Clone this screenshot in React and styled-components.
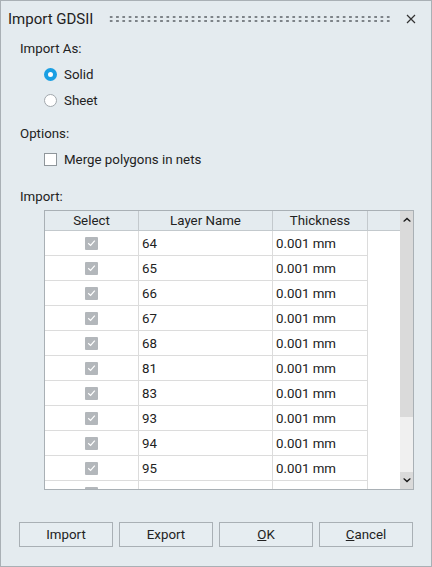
import styled, { createGlobalStyle } from 'styled-components'

const GlobalStyle = createGlobalStyle`
  html, body { margin: 0; padding: 0; background: #e4ebef; }
  body { font-family: Roboto, "Liberation Sans", sans-serif; color: #222; }
  * { box-sizing: border-box; }
`

const layers = ['64', '65', '66', '67', '68', '81', '83', '93', '94', '95', '100']

const Check = () => (
  <svg width="9" height="8" viewBox="0 0 9 8">
    <path d="M1.2 4.2 L3.6 6.4 L7.8 1.6" fill="none" stroke="#fff" strokeWidth="1.2" />
  </svg>
)

const Arrow = ({ down }) => (
  <svg width="8" height="5" viewBox="0 0 8 5" style={down ? { transform: 'rotate(180deg)' } : undefined}>
    <path d="M0 4.2 L4 0.4 L8 4.2 L6.6 4.8 L4 2.4 L1.4 4.8 Z" fill="#1a1a1a" />
  </svg>
)

const App = () => {
  return (
    <>
      <GlobalStyle />
      <Dialog>
        <TitleBar>
          <Title>Import GDSII</Title>
          <Grip />
          <Close>
            <svg width="10" height="10" viewBox="0 0 10 10">
              <path d="M1 1 L9 9 M9 1 L1 9" stroke="#333" strokeWidth="1.2" />
            </svg>
          </Close>
        </TitleBar>
        <Body>
          <Label>Import As:</Label>
          <OptionRow $top={2}>
            <Radio $checked />
            <span>Solid</span>
          </OptionRow>
          <OptionRow>
            <Radio />
            <span>Sheet</span>
          </OptionRow>
          <Label $top={11}>Options:</Label>
          <OptionRow $top={2}>
            <Box />
            <span>Merge polygons in nets</span>
          </OptionRow>
          <Label $top={15}>Import:</Label>
          <Table>
            <Grid>
              <HeadRow>
                <HeadCell>Select</HeadCell>
                <HeadCell>Layer Name</HeadCell>
                <HeadCell>Thickness</HeadCell>
                <HeadCell />
              </HeadRow>
              {layers.map((l) => (
                <Row key={l}>
                  <Cell $center>
                    <TableCheck><Check /></TableCheck>
                  </Cell>
                  <Cell>{l}</Cell>
                  <Cell>0.001 mm</Cell>
                  <Filler />
                </Row>
              ))}
            </Grid>
            <Scrollbar>
              <ScrollButton><Arrow /></ScrollButton>
              <Thumb />
              <Track />
              <ScrollButton><Arrow down /></ScrollButton>
            </Scrollbar>
          </Table>
        </Body>
        <Footer>
          <Button>Import</Button>
          <Button>Export</Button>
          <Button><u>O</u>K</Button>
          <Button><u>C</u>ancel</Button>
        </Footer>
      </Dialog>
    </>
  )
}

export default App

const Dialog = styled.div`
  width: 432px;
  height: 567px;
  display: flex;
  flex-direction: column;
  background: #e4ebef;
  border: 1px solid #a9b0b5;
  overflow: hidden;
`
const TitleBar = styled.div`
  height: 35px;
  display: flex;
  align-items: center;
  padding: 0 14px 0 7px;
`
const Title = styled.div`
  font-size: 15px;
  color: #222;
`
const Grip = styled.div`
  flex: 1;
  height: 7px;
  margin: 0 14px 0 15px;
  background-image: radial-gradient(circle, #7d8388 1.1px, transparent 1.3px);
  background-size: 6.3px 4px;
  background-position: 0 0;
`
const Close = styled.div`
  width: 12px;
  height: 12px;
  display: flex;
  align-items: center;
  justify-content: center;
`
const Body = styled.div`
  display: flex;
  flex-direction: column;
  padding: 3px 18px 0 19px;
`
const Label = styled.div`
  height: 20px;
  line-height: 20px;
  font-size: 13.3px;
  margin-top: ${(p) => p.$top || 0}px;
`
const OptionRow = styled.div`
  height: 26px;
  display: flex;
  align-items: center;
  gap: 7px;
  padding-left: 24px;
  font-size: 13.3px;
  margin-top: ${(p) => p.$top || 0}px;
`
const Radio = styled.span`
  width: 13px;
  height: 13px;
  border-radius: 50%;
  background: #fff;
  border: ${(p) => (p.$checked ? '4px solid #1a9fe3' : '1px solid #a2a8ad')};
`
const Box = styled.span`
  width: 13px;
  height: 13px;
  background: #fff;
  border: 1px solid #8f969b;
`
const Table = styled.div`
  margin: 3px 0 0 24px;
  width: 370px;
  height: 280px;
  display: flex;
  border: 1px solid #a9b0b5;
  background: #fff;
`
const Grid = styled.div`
  width: 355px;
  overflow: hidden;
`
const HeadRow = styled.div`
  display: grid;
  grid-template-columns: 94px 134px 95px 1fr;
  height: 20px;
  background: #e4ebef;
  border-bottom: 1px solid #c3c9cd;
`
const HeadCell = styled.div`
  font-size: 13.3px;
  line-height: 19px;
  text-align: center;
  border-right: 1px solid #c3c9cd;
  &:last-child { border-right: none; }
`
const Row = styled.div`
  display: grid;
  grid-template-columns: 94px 134px 95px 1fr;
  height: 25px;
`
const Cell = styled.div`
  font-size: 13.3px;
  display: flex;
  align-items: center;
  justify-content: ${(p) => (p.$center ? 'center' : 'flex-start')};
  padding-left: ${(p) => (p.$center ? 0 : 3)}px;
  border-right: 1px solid #dcdcdc;
  border-bottom: 1px solid #dcdcdc;
`
const Filler = styled.div``
const TableCheck = styled.span`
  width: 13px;
  height: 13px;
  border-radius: 1px;
  background: #b3b7bb;
  display: flex;
  align-items: center;
  justify-content: center;
`
const Scrollbar = styled.div`
  width: 13px;
  display: flex;
  flex-direction: column;
  background: #f0f0f0;
`
const ScrollButton = styled.div`
  height: 17px;
  background: #dadada;
  display: flex;
  align-items: center;
  justify-content: center;
`
const Thumb = styled.div`
  height: 189px;
  background: #dadada;
`
const Track = styled.div`
  flex: 1;
`
const Footer = styled.div`
  margin-top: auto;
  display: grid;
  grid-template-columns: repeat(4, 94px);
  gap: 6px;
  padding: 0 0 19px 18px;
`
const Button = styled.div`
  height: 25px;
  border: 1px solid #a9b0b5;
  background: #e6edf1;
  font-size: 13.3px;
  display: flex;
  align-items: center;
  justify-content: center;
  color: #222;
`
